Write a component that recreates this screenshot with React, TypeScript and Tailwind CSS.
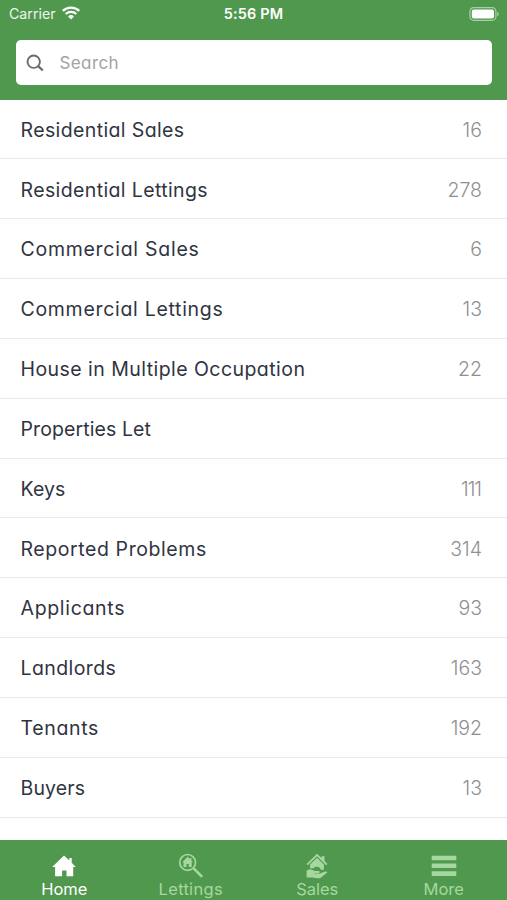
import React from "react";
import clsx from "clsx";

const rows = [
  { label: "Residential Sales", count: "16", tracking: "tracking-[0.38px]" },
  { label: "Residential Lettings", count: "278", tracking: "tracking-[0.38px]" },
  { label: "Commercial Sales", count: "6", tracking: "tracking-[0.73px]" },
  { label: "Commercial Lettings", count: "13", tracking: "tracking-[0.7px]" },
  { label: "House in Multiple Occupation", count: "22", tracking: "tracking-[0.45px]" },
  { label: "Properties Let", count: "", tracking: "tracking-[0.1px]" },
  { label: "Keys", count: "111", tracking: "tracking-[0.1px]" },
  { label: "Reported Problems", count: "314", tracking: "tracking-[0.58px]" },
  { label: "Applicants", count: "93", tracking: "tracking-[0.68px]" },
  { label: "Landlords", count: "163", tracking: "tracking-[0.4px]" },
  { label: "Tenants", count: "192", tracking: "tracking-[0.65px]" },
  { label: "Buyers", count: "13", tracking: "tracking-[0.15px]" },
];

const HomeIcon = () => (
  <svg className="h-[26px] w-[26px]" viewBox="0 0 26 26" fill="currentColor">
    <path d="M13 2.400 18.300 7.400V5h2.400v4.700l4 4.300h-2.500v9.300h-6.700v-5.700h-4.400v5.700H4.100V14H1.200z" />
  </svg>
);

const LettingsIcon = () => (
  <svg className="h-[26px] w-[26px]" viewBox="0 0 26 26" fill="none">
    <circle cx="9.6" cy="9.4" r="7.9" stroke="currentColor" strokeWidth="1.7" />
    <path d="m15.6 15.4 8.6 8.5" stroke="currentColor" strokeWidth="2.7" />
    <path d="M9.600 3.700 4.300 9.200h1.200v4.800h3v-3h2.200v3h3V9.200h1.200l-1.500-1.700V5H12v1.100z" fill="currentColor" />
  </svg>
);

const SalesIcon = () => (
  <svg className="h-[26px] w-[26px]" viewBox="0 0 26 26" fill="currentColor">
    <path d="m13 .8 4.5 4.300V3.200h3v4.900l2.900 2.900-1.200 1.200L13 3.300l-9.200 8.900L2.600 11z" />
    <path d="m13 4.800 6.900 6.700v5.200h-3.200c0-3.800-6.700-3.800-7.200-1.300-1.300-.4-2.400-.2-3.400.4v-4.300z" />
    <path d="M2.600 17.700c1.600-1.200 4.300-1.700 6.500-.5l1.400.9h4.300c1.300.3 1.200 1.900-.2 2h-3.900v.5h5.200l5.200-2.100c1.900-.5 2.800.6 1.500 1.600l-5.400 4.300c-1.400 1-2.700 1-4.200.8l-4.200-.7H2.600z" />
  </svg>
);

const MoreIcon = () => (
  <svg className="h-[26px] w-[26px]" viewBox="0 0 26 26" fill="currentColor">
    <path d="M.7 2.700h24.600v4.600H.7zM.7 10.500h24.600v4.600H.7zM.7 18.300h24.600v4.600H.7z" />
  </svg>
);

const tabs = [
  { label: "Home", icon: HomeIcon, tracking: "tracking-[0px]" },
  { label: "Lettings", icon: LettingsIcon, tracking: "tracking-[0.3px]" },
  { label: "Sales", icon: SalesIcon, tracking: "tracking-[0px]" },
  { label: "More", icon: MoreIcon, tracking: "tracking-[0px]" },
];

function StatusBar() {
  return (
    <div className="grid h-[27px] grid-cols-3 items-center text-[14.500px] leading-none text-white">
      <div className="flex items-center pl-[9px]">
        <span className="w-[53px] pt-[1px] text-[14.200px] text-white/90">Carrier</span>
        <svg className="h-[14px] w-[18px]" viewBox="0 0 18 14" fill="none" stroke="currentColor">
          <path d="M.8 4.900a11.700 11.700 0 0 1 16.400 0" strokeWidth="2.300" />
          <path d="M3.700 8a7.600 7.600 0 0 1 10.600 0" strokeWidth="2.200" />
          <path d="M9 13.500 6 10.500a4.300 4.300 0 0 1 6 0z" fill="currentColor" stroke="none" />
        </svg>
      </div>
      <div className="pt-[1px] text-center font-semibold whitespace-nowrap tracking-[0.15px]">5:56 PM</div>
      <div className="flex justify-end pr-[8px]">
        <svg className="h-[14px] w-[30px]" viewBox="0 0 30 14" fill="none">
          <rect x=".9" y=".6" width="26" height="12.700" rx="3.800" stroke="#a9d0a7" strokeWidth="1.200" />
          <rect x="2.800" y="2.400" width="22.200" height="9.100" rx="2" fill="#fff" />
          <path d="M28.300 4.700c1.900.8 1.900 3.800 0 4.600z" fill="#a9d0a7" />
        </svg>
      </div>
    </div>
  );
}

export default function App() {
  return (
    <div className="flex h-[900px] w-[507px] flex-col overflow-hidden bg-white font-['Inter',sans-serif]">
      <header className="h-[99.500px] shrink-0 bg-[#50984d]">
        <StatusBar />
        <div className="mt-[13px] mr-[15px] ml-[15.500px] flex h-[45px] items-center rounded-[5px] bg-white pl-[10.500px]">
          <svg className="h-[18px] w-[18px]" viewBox="0 0 18 18" fill="none" stroke="#6b6b6b" strokeWidth="1.900">
            <circle cx="7.700" cy="7.700" r="6.200" />
            <path d="m12.200 12.200 4.600 4.300" strokeWidth="2.300" />
          </svg>
          <span className="ml-[15.500px] pt-[2px] text-[17px] leading-none tracking-[0.4px] text-[#a3a3a3] [font-feature-settings:'cv11']">Search</span>
        </div>
      </header>

      <main className="min-h-0 flex-1 overflow-hidden [font-feature-settings:'cv11']">
        {rows.map(({ label, count, tracking }) => (
          <div
            key={label}
            className="flex h-[59.850px] items-center justify-between border-b border-[#e9e9eb] pt-[3px] pr-[25px] pl-[20.500px] text-[19.500px] leading-none"
          >
            <span className={clsx("whitespace-nowrap text-[#30343f]", tracking)}>{label}</span>
            <span className={clsx("font-light text-[#8f8f8f]", count === "111" && "mr-[1px] tracking-[-1px]")}>{count}</span>
          </div>
        ))}
      </main>

      <nav className="grid h-[60px] shrink-0 grid-cols-4 bg-[#50984d] pt-[13px] pl-[1px]">
        {tabs.map(({ label, icon: Icon, tracking }, i) => (
          <div key={label} className={clsx("flex flex-col items-center", i === 0 ? "text-white" : "text-[#a5d8a0]")}>
            <Icon />
            <span className={clsx("text-[16.500px] leading-[20px]", tracking)}>{label}</span>
          </div>
        ))}
      </nav>
    </div>
  );
}
